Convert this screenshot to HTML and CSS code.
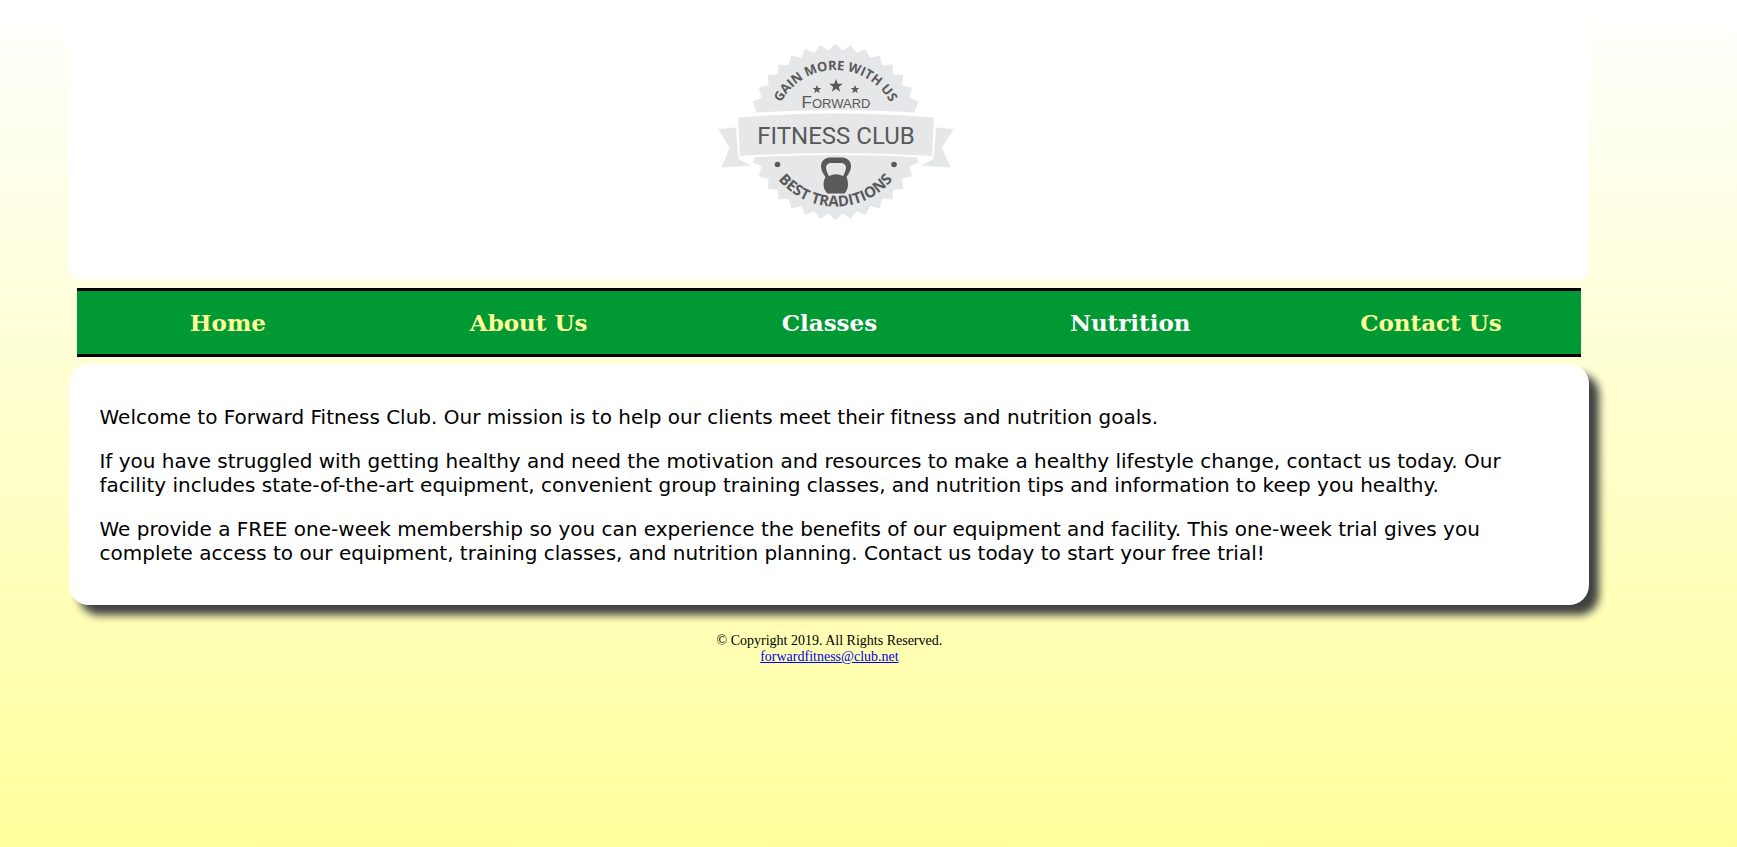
FILE: index.html
```html
<!DOCTYPE html>
<html lang="en">
<head>
<meta charset="utf-8">
<title>Forward Fitness Club</title>
<link rel="stylesheet" href="styles.css">
</head>
<body>
<div class="container">
  <header class="header">
    <svg class="logo" viewBox="0 0 270 200" role="img" aria-label="Forward Fitness Club logo">
      <defs>
        <rect id="tooth" x="73" y="39.5" width="125" height="125" rx="1"/>
        <path id="arc-top" d="M73.500 102A62 62 0 0 1 197.500 102"/>
        <path id="arc-bottom" d="M61 102A74.500 74.500 0 0 0 210 102"/>
        <path id="star" d="M0-7 1.8-2.2 6.7-2.2 2.8.9 4.2 5.7 0 2.8-4.2 5.7-2.8.9-6.7-2.2-1.8-2.2Z"/>
      </defs>
      <g class="logo-light">
        <use href="#tooth" transform="rotate(5 135.5 102)"/>
        <use href="#tooth" transform="rotate(15 135.5 102)"/>
        <use href="#tooth" transform="rotate(25 135.5 102)"/>
        <use href="#tooth" transform="rotate(35 135.5 102)"/>
        <use href="#tooth" transform="rotate(45 135.5 102)"/>
        <use href="#tooth" transform="rotate(55 135.5 102)"/>
        <use href="#tooth" transform="rotate(65 135.5 102)"/>
        <use href="#tooth" transform="rotate(75 135.5 102)"/>
        <use href="#tooth" transform="rotate(85 135.5 102)"/>
      </g>
      <path class="logo-ribbon" d="M36 84Q135 76 236 84L234 128Q135 122 38 128Z"/>
      <g class="logo-light">
        <path d="M38 87.500Q135 79.500 234 87.500L232 126Q135 120 40 126Z"/>
        <path d="M18.500 99 36 97.500 38.500 129 51 135.500 21.500 137.500 29.500 118Z"/>
        <path d="M253.500 99 236 97.500 233.500 129 221 135.500 250.500 137.500 242 118Z"/>
      </g>
      <g class="logo-dark">
        <use href="#star" transform="translate(136 56)"/>
        <use href="#star" transform="translate(117 59.500) scale(.65)"/>
        <use href="#star" transform="translate(155 59.500) scale(.65)"/>
        <circle cx="77.500" cy="134.500" r="2.800"/>
        <circle cx="194" cy="134.500" r="2.800"/>
        <path fill-rule="evenodd" d="M129 127.500H143Q150.500 128.500 151 136Q151 141 146.500 147Q148 150 148 154Q148 160 144.500 163.500H127.500Q123.500 160 123.500 154Q123.500 150 125.500 147Q121 141 121 136Q121.500 128.500 129 127.500ZM130 133Q126 134 126 137.500Q126 141 129 146Q136 142.500 143 146Q146 141 146 137.500Q146 134 142 133Z"/>
        <text class="logo-arc" text-anchor="middle"><textPath href="#arc-top" startOffset="50%">GAIN MORE WITH US</textPath></text>
        <text class="logo-arc logo-arc-bottom" text-anchor="middle"><textPath href="#arc-bottom" startOffset="50%">BEST TRADITIONS</textPath></text>
        <text class="logo-forward" x="136" y="78" text-anchor="middle">F<tspan class="logo-small">ORWARD</tspan></text>
        <text class="logo-name" x="136" y="114" text-anchor="middle">FITNESS CLUB</text>
      </g>
    </svg>
  </header>
  <nav class="nav">
    <a class="nav-link" href="#home">Home</a>
    <a class="nav-link" href="#about">About Us</a>
    <a class="nav-link nav-link-new" href="#classes">Classes</a>
    <a class="nav-link nav-link-new" href="#nutrition">Nutrition</a>
    <a class="nav-link" href="#contact">Contact Us</a>
  </nav>
  <main class="content">
    <p>Welcome to Forward Fitness Club. Our mission is to help our clients meet their fitness and nutrition goals.</p>
    <p>If you have struggled with getting healthy and need the motivation and resources to make a healthy lifestyle change, contact us today. Our facility includes state-of-the-art equipment, convenient group training classes, and nutrition tips and information to keep you healthy.</p>
    <p>We provide a FREE one-week membership so you can experience the benefits of our equipment and facility. This one-week trial gives you complete access to our equipment, training classes, and nutrition planning. Contact us today to start your free trial!</p>
  </main>
  <footer class="footer">
    <div>© Copyright 2019. All Rights Reserved.</div>
    <a class="email" href="mailto:forwardfitness@club.net">forwardfitness@club.net</a>
  </footer>
</div>
</body>
</html>
```
FILE: styles.css
```css
body {
  margin: 0;
  min-height: 100vh;
  background: linear-gradient(#ffffff, #ffff9c);
}
.container {
  width: 87.5%;
  margin-left: 4%;
}
.header {
  padding: 30px 0 50px;
  text-align: center;
  background: #ffffff;
  border-radius: 0 0 10px 10px;
}
.logo {
  display: block;
  width: 270px;
  height: 200px;
  margin: 0 auto;
  padding-left: 12px;
}
.logo-light { fill: #e6e7e8; }
.logo-ribbon { fill: #ffffff; }
.logo-dark { fill: #58595b; }
.logo-arc { font: bold 13px "Open Sans", sans-serif; }
.logo-arc-bottom { font-size: 15px; }
.logo-forward { font: 17px "Liberation Sans", sans-serif; }
.logo-small { font-size: 13px; }
.logo-name { font: 24px "Roboto", sans-serif; }
.nav {
  display: flex;
  margin: 8px 8px 7px;
  background: #009933;
  border-top: 3px solid #000000;
  border-bottom: 3px solid #000000;
}
.nav-link {
  flex: 1;
  padding: 15px 0;
  color: #ffff99;
  font: bold 23px/33px Georgia, "DejaVu Serif", serif;
  text-align: center;
  text-decoration: none;
}
.nav-link-new { color: #ffffff; }
.content {
  padding: 21px 30px 20px;
  background: #ffffff;
  border-radius: 20px;
  box-shadow: 10px 10px 8px #404040;
  font: 20px/24px Verdana, "DejaVu Sans", sans-serif;
  font-variant-ligatures: none;
}
.content p { margin: 20px 0; }
.content::before, .content::after {
  display: table;
  content: "";
}
.footer {
  padding: 28px 0;
  font: 14px/16px "Liberation Serif", serif;
  text-align: center;
}
.email { color: #0000ee; }
```
